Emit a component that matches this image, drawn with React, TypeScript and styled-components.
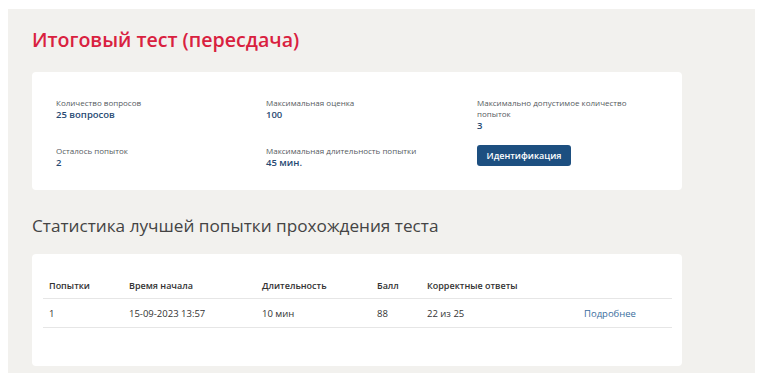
import React, { FC } from 'react';
import styled, { createGlobalStyle } from 'styled-components';

const GlobalStyle = createGlobalStyle`
    html, body {
        margin: 0;
        padding: 0;
        background: #ffffff;
    }
    body {
        font-family: 'Open Sans', 'Noto Sans', sans-serif;
    }
`;

const Page = styled.div`
    width: 764px;
    height: 380px;
    padding: 9px 9px 7px 8px;
    box-sizing: border-box;
`;

const Panel = styled.main`
    height: 100%;
    background: #f2f1ee;
    padding: 17px 0 0 24px;
    box-sizing: border-box;
`;

const Title = styled.h1`
    margin: 0 0 18px 0;
    font-size: 19.6px;
    line-height: 28px;
    font-weight: 600;
    color: #d9213f;
`;

const Card = styled.section<{ $pad: string }>`
    width: 650px;
    box-sizing: border-box;
    background: #ffffff;
    border-radius: 4px;
    padding: ${(p) => p.$pad};
`;

const InfoGrid = styled.div`
    display: grid;
    grid-template-columns: 210px 211px 170px;
    row-gap: 13px;
    align-items: start;
`;

const Info = styled.div`
    display: flex;
    flex-direction: column;
`;

const Label = styled.span`
    font-size: 8px;
    line-height: 11px;
    color: #555a60;
`;

const Value = styled.span`
    font-size: 9.5px;
    line-height: 13px;
    font-weight: 600;
    color: #274a72;
`;

const IdButton = styled.button`
    justify-self: start;
    width: 94px;
    height: 21px;
    border: none;
    border-radius: 3px;
    background: #1d4f80;
    color: #ffffff;
    font-family: inherit;
    font-size: 9px;
    font-weight: 600;
    padding: 0;
`;

const SectionTitle = styled.h2`
    margin: 23px 0 15px 0;
    font-size: 17.2px;
    line-height: 26px;
    font-weight: 400;
    color: #444444;
`;

const Table = styled.table`
    width: 100%;
    table-layout: fixed;
    border-collapse: collapse;
    font-size: 9.5px;
    color: #333333;

    th,
    td {
        box-sizing: border-box;
        padding-left: 0;
        border-bottom: 1px solid #e6e6e6;
    }

    th:first-child,
    td:first-child {
        padding-left: 6px;
    }
`;

const Th = styled.th<{ $w: number }>`
    text-align: left;
    font-size: 9px;
    font-weight: 600;
    padding: 0 0 6px 0;
    width: ${(p) => `${p.$w}px`};
`;

const Td = styled.td`
    padding: 8px 0 7px 0;
`;

const MoreLink = styled.a`
    color: #3a6d9e;
    text-decoration: none;
`;

const infoItems = [
    { label: 'Количество вопросов', value: '25 вопросов' },
    { label: 'Максимальная оценка', value: '100' },
    { label: 'Максимально допустимое количество попыток', value: '3' },
    { label: 'Осталось попыток', value: '2' },
    { label: 'Максимальная длительность попытки', value: '45 мин.' },
];

const columns = [
    { title: 'Попытки', width: 86 },
    { title: 'Время начала', width: 133 },
    { title: 'Длительность', width: 115 },
    { title: 'Балл', width: 50 },
    { title: 'Корректные ответы', width: 157 },
    { title: '', width: 88 },
];

const App: FC = () => {
    return (
        <Page>
            <GlobalStyle />
            <Panel>
                <Title>Итоговый тест (пересдача)</Title>
                <Card $pad={'25px 24px 21px 24px'}>
                    <InfoGrid>
                        {infoItems.map((item) => (
                            <Info key={item.label}>
                                <Label>{item.label}</Label>
                                <Value>{item.value}</Value>
                            </Info>
                        ))}
                        <IdButton>Идентификация</IdButton>
                    </InfoGrid>
                </Card>
                <SectionTitle>Статистика лучшей попытки прохождения теста</SectionTitle>
                <Card $pad={'25px 10px 38px 11px'}>
                    <Table>
                        <thead>
                            <tr>
                                {columns.map((col) => (
                                    <Th key={col.width} $w={col.width}>
                                        {col.title}
                                    </Th>
                                ))}
                            </tr>
                        </thead>
                        <tbody>
                            <tr>
                                <Td>1</Td>
                                <Td>15-09-2023 13:57</Td>
                                <Td>10 мин</Td>
                                <Td>88</Td>
                                <Td>22 из 25</Td>
                                <Td>
                                    <MoreLink href={'#'}>Подробнее</MoreLink>
                                </Td>
                            </tr>
                        </tbody>
                    </Table>
                </Card>
            </Panel>
        </Page>
    );
};

export default App;
